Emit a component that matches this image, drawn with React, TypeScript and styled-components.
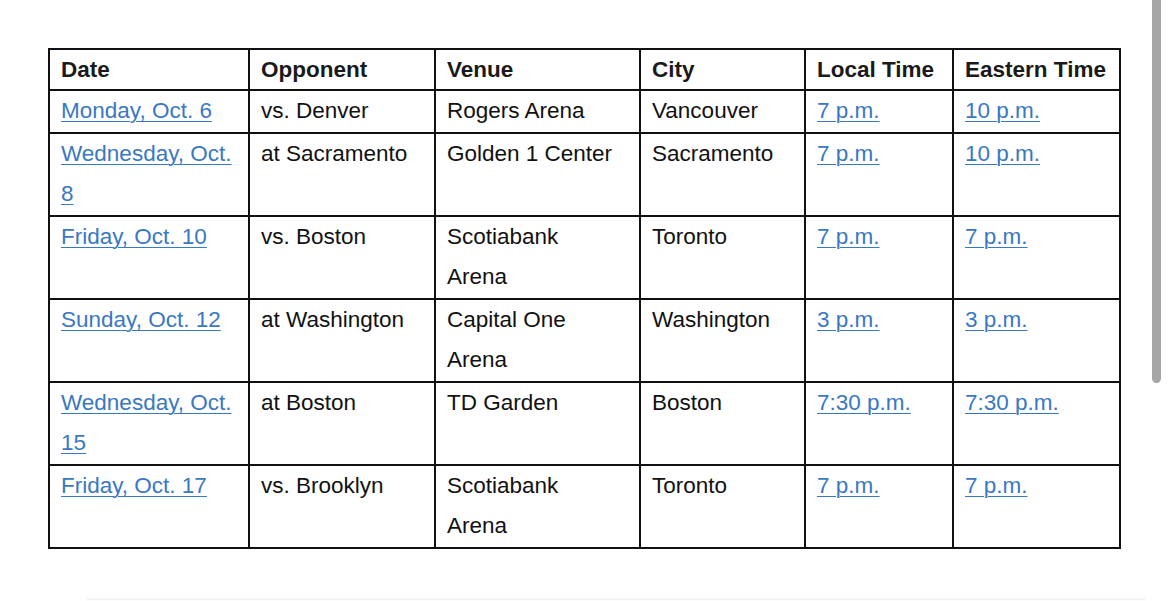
import React from "react";
import styled, { createGlobalStyle } from "styled-components";

const Global = createGlobalStyle`
  html, body { margin: 0; padding: 0; background: #fff; }
  body { font-family: "Liberation Sans", Arial, Helvetica, sans-serif; color: #111; overflow: hidden; }
`;

const Page = styled.div`
  position: relative;
  width: 1170px;
  height: 601px;
  padding: 48px 0 0 48px;
  box-sizing: border-box;
  background: #fff;
`;

const Table = styled.table`
  border-collapse: collapse;
  table-layout: fixed;
  width: 1071px;
  border: 2px solid #111;
  font-size: 22.5px;
  line-height: 40.5px;
`;

const HeadCell = styled.th`
  border: 2px solid #111;
  text-align: left;
  font-weight: bold;
  color: #1a1a1a;
  line-height: 39px;
  padding: 0 10px 0 11px;
  vertical-align: top;
`;

const Cell = styled.td<{ $pr?: number }>`
  border: 2px solid #111;
  padding: 0 ${(p) => p.$pr ?? 10}px 0 11px;
  vertical-align: top;
  color: #111;
`;

const Link = styled.a`
  color: #3a78c3;
  text-decoration: underline;
  text-decoration-thickness: 1px;
  text-underline-offset: 3px;
`;

const Scrollbar = styled.div`
  position: absolute;
  top: 0;
  left: 1152px;
  width: 9px;
  height: 383px;
  background: #a6a6a6;
  border-radius: 0 0 5px 5px;
`;

const NextCard = styled.div`
  margin: 50px 0 0 39px;
  width: 1058px;
  height: 20px;
  border-top: 1px solid #f1f1f1;
  box-shadow: 0 -1px 3px rgba(0, 0, 0, 0.04);
  background: #fdfdfd;
`;

type Row = {
  date: string;
  opp: string;
  venue: string;
  city: string;
  local: string;
  east: string;
};

const rows: Row[] = [
  { date: "Monday, Oct. 6", opp: "vs. Denver", venue: "Rogers Arena", city: "Vancouver", local: "7 p.m.", east: "10 p.m." },
  { date: "Wednesday, Oct. 8", opp: "at Sacramento", venue: "Golden 1 Center", city: "Sacramento", local: "7 p.m.", east: "10 p.m." },
  { date: "Friday, Oct. 10", opp: "vs. Boston", venue: "Scotiabank Arena", city: "Toronto", local: "7 p.m.", east: "7 p.m." },
  { date: "Sunday, Oct. 12", opp: "at Washington", venue: "Capital One Arena", city: "Washington", local: "3 p.m.", east: "3 p.m." },
  { date: "Wednesday, Oct. 15", opp: "at Boston", venue: "TD Garden", city: "Boston", local: "7:30 p.m.", east: "7:30 p.m." },
  { date: "Friday, Oct. 17", opp: "vs. Brooklyn", venue: "Scotiabank Arena", city: "Toronto", local: "7 p.m.", east: "7 p.m." },
];

export default function App() {
  return (
    <>
      <Global />
      <Page>
        <Table>
          <colgroup>
            <col style={{ width: 200 }} />
            <col style={{ width: 186 }} />
            <col style={{ width: 205 }} />
            <col style={{ width: 165 }} />
            <col style={{ width: 148 }} />
            <col style={{ width: 167 }} />
          </colgroup>
          <thead>
            <tr>
              <HeadCell>Date</HeadCell>
              <HeadCell>Opponent</HeadCell>
              <HeadCell>Venue</HeadCell>
              <HeadCell>City</HeadCell>
              <HeadCell>Local Time</HeadCell>
              <HeadCell>Eastern Time</HeadCell>
            </tr>
          </thead>
          <tbody>
            {rows.map((r) => (
              <tr key={r.date}>
                <Cell>
                  <Link href="#">{r.date}</Link>
                </Cell>
                <Cell>{r.opp}</Cell>
                <Cell $pr={20}>{r.venue}</Cell>
                <Cell>{r.city}</Cell>
                <Cell>
                  <Link href="#">{r.local}</Link>
                </Cell>
                <Cell>
                  <Link href="#">{r.east}</Link>
                </Cell>
              </tr>
            ))}
          </tbody>
        </Table>
        <NextCard />
        <Scrollbar />
      </Page>
    </>
  );
}
